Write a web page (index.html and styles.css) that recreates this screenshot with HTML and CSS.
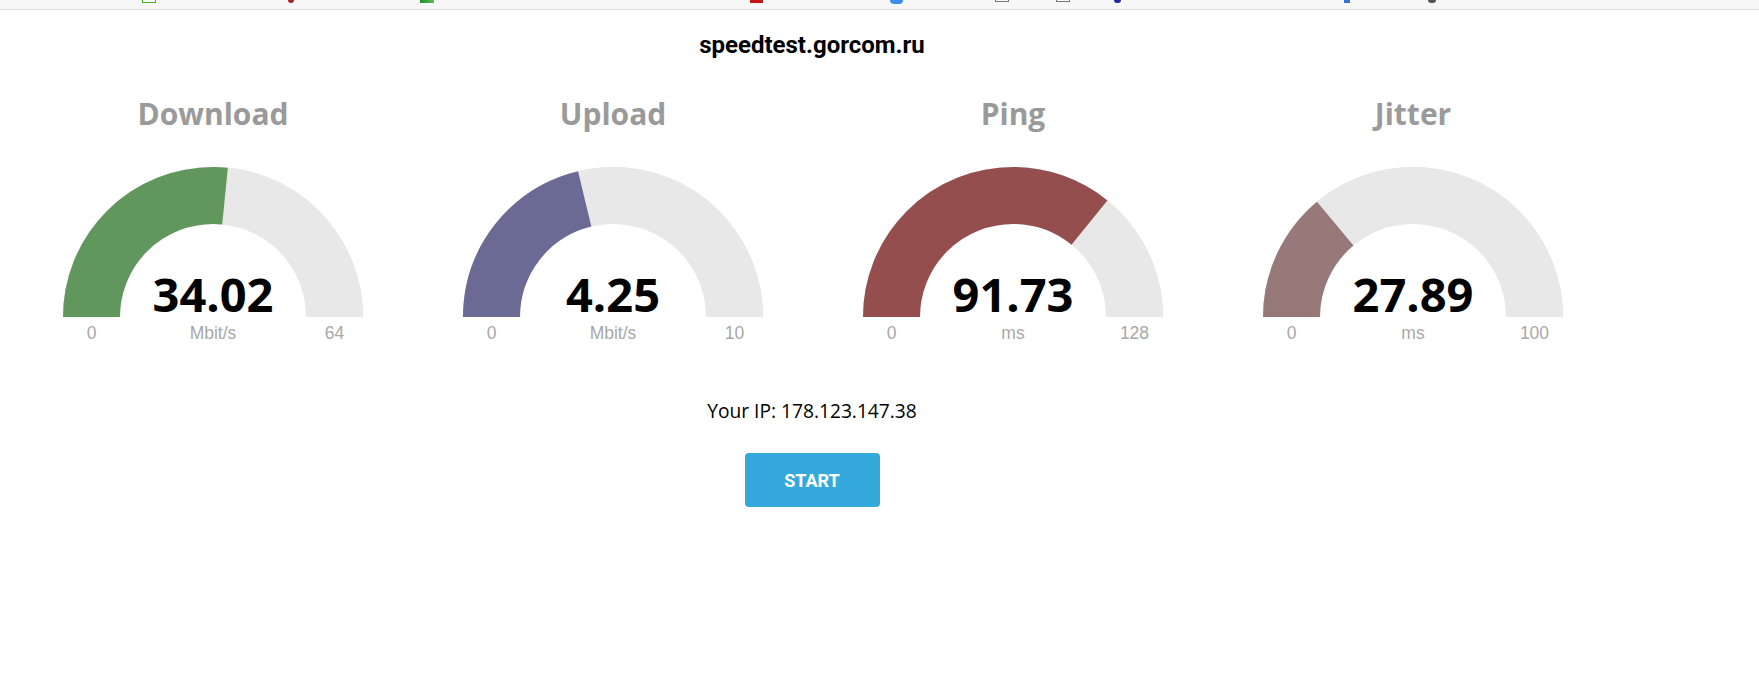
FILE: index.html
```html
<!DOCTYPE html>
<html lang="en">
<head>
    <meta charset="UTF-8">
    <meta name="viewport" content="width=device-width, initial-scale=1.0">
    <title>speedtest.gorcom.ru</title>
    <link rel="stylesheet" href="styles.css">
</head>
<body>
    <div class="topbar">
        <span class="bm b1"></span>
        <span class="bm b2"></span>
        <span class="bm b3"></span>
        <span class="bm b4"></span>
        <span class="bm b5"></span>
        <span class="bm b6"></span>
        <span class="bm b7"></span>
        <span class="bm b8"></span>
        <span class="bm b9"></span>
        <span class="bm b10"></span>
    </div>

    <div class="page">
        <h1 class="site">speedtest.gorcom.ru</h1>

        <div class="gauges">
            <div class="gauge">
                <h2>Download</h2>
                <svg class="meter" width="300" height="150" viewBox="0 0 300 150">
                    <path class="rim" d="M 1 150 A 149 149 0 0 1 299 150" />
                    <path class="track" d="M 28.5 150 A 121.5 121.5 0 0 1 271.5 150" />
                    <path class="fill" d="M 28.5 150 A 121.5 121.5 0 0 1 271.5 150" pathLength="100" stroke="#61965c" stroke-dasharray="53.16 200" />
                    <text class="value" x="150" y="145">34.02</text>
                </svg>
                <div class="scale"><span>0</span><span>Mbit/s</span><span>64</span></div>
            </div>

            <div class="gauge">
                <h2>Upload</h2>
                <svg class="meter" width="300" height="150" viewBox="0 0 300 150">
                    <path class="rim" d="M 1 150 A 149 149 0 0 1 299 150" />
                    <path class="track" d="M 28.5 150 A 121.5 121.5 0 0 1 271.5 150" />
                    <path class="fill" d="M 28.5 150 A 121.5 121.5 0 0 1 271.5 150" pathLength="100" stroke="#6b6a94" stroke-dasharray="42.5 200" />
                    <text class="value" x="150" y="145">4.25</text>
                </svg>
                <div class="scale"><span>0</span><span>Mbit/s</span><span>10</span></div>
            </div>

            <div class="gauge">
                <h2>Ping</h2>
                <svg class="meter" width="300" height="150" viewBox="0 0 300 150">
                    <path class="rim" d="M 1 150 A 149 149 0 0 1 299 150" />
                    <path class="track" d="M 28.5 150 A 121.5 121.5 0 0 1 271.5 150" />
                    <path class="fill" d="M 28.5 150 A 121.5 121.5 0 0 1 271.5 150" pathLength="100" stroke="#944e4e" stroke-dasharray="71.66 200" />
                    <text class="value" x="150" y="145">91.73</text>
                </svg>
                <div class="scale"><span>0</span><span>ms</span><span>128</span></div>
            </div>

            <div class="gauge">
                <h2>Jitter</h2>
                <svg class="meter" width="300" height="150" viewBox="0 0 300 150">
                    <path class="rim" d="M 1 150 A 149 149 0 0 1 299 150" />
                    <path class="track" d="M 28.5 150 A 121.5 121.5 0 0 1 271.5 150" />
                    <path class="fill" d="M 28.5 150 A 121.5 121.5 0 0 1 271.5 150" pathLength="100" stroke="#987979" stroke-dasharray="27.89 200" />
                    <text class="value" x="150" y="145">27.89</text>
                </svg>
                <div class="scale"><span>0</span><span>ms</span><span>100</span></div>
            </div>
        </div>

        <p class="ip">Your IP: 178.123.147.38</p>
        <button class="start">START</button>
    </div>
</body>
</html>
```

FILE: styles.css
```css
body { margin: 0; background: #fff; font-family: "Open Sans", sans-serif; color: #000; }

/* strip of the browser bookmarks bar at the very top */
.topbar { height: 9px; background: #f7f7f7; border-bottom: 1px solid #dcdcdc; display: flex; align-items: flex-start; }
.bm { display: block; height: 3px; }
.b1 { margin-left: 142px; width: 12px; border: 1px solid #4caf1f; border-top: none; height: 2px; }
.b2 { margin-left: 132px; width: 6px; background: #a52020; border-radius: 0 0 3px 3px; }
.b3 { margin-left: 126px; width: 14px; background: linear-gradient(90deg, #1e8c3a, #5cbf4a); }
.b4 { margin-left: 316px; width: 13px; background: #c4161c; }
.b5 { margin-left: 127px; width: 13px; background: #3b8eea; border-radius: 0 0 6px 6px; height: 4px; }
.b6 { margin-left: 92px; width: 12px; border: 1px solid #777; border-top: none; height: 1px; }
.b7 { margin-left: 47px; width: 12px; border: 1px solid #777; border-top: none; height: 1px; }
.b8 { margin-left: 44px; width: 7px; background: #1b2a9c; border-radius: 0 0 4px 4px; }
.b9 { margin-left: 223px; width: 6px; background: #3a6fd8; }
.b10 { margin-left: 78px; width: 8px; background: #555; border-radius: 0 0 4px 4px; }

.page { width: 1598px; margin-left: 13px; text-align: center; }

.site { font-family: Roboto, sans-serif; font-weight: bold; font-size: 24px; line-height: 30px; margin: 20px 0 0; }

.gauges { display: flex; margin-top: 34px; }
.gauge { width: 400px; flex-shrink: 0; display: flex; flex-direction: column; align-items: center; }
.gauge h2 { margin: 0; font-size: 30px; line-height: 40px; font-weight: bold; color: #9a9a9a; }
.meter { display: block; margin-top: 33px; overflow: visible; }
.meter path { fill: none; }
.rim { stroke: #dedddf; stroke-width: 2; }
.track { stroke: #e9e8e9; stroke-width: 57; }
.fill { stroke-width: 57; }
.value { font-family: "Open Sans", sans-serif; font-weight: bold; font-size: 47px; text-anchor: middle; fill: #000; }

.scale { width: 300px; display: grid; grid-template-columns: 57px 1fr 57px; margin-top: 6px; font-family: "Liberation Sans", Arial, sans-serif; font-size: 17.5px; line-height: 20px; color: #a8a8a8; }

.ip { font-size: 19.2px; line-height: 27px; margin: 54px 0 0; }

.start { margin-top: 29px; width: 135px; height: 54px; border: none; border-radius: 4px; background: #36a9dc; color: #fff; font-family: Roboto, sans-serif; font-weight: bold; font-size: 18px; cursor: pointer; }
```
